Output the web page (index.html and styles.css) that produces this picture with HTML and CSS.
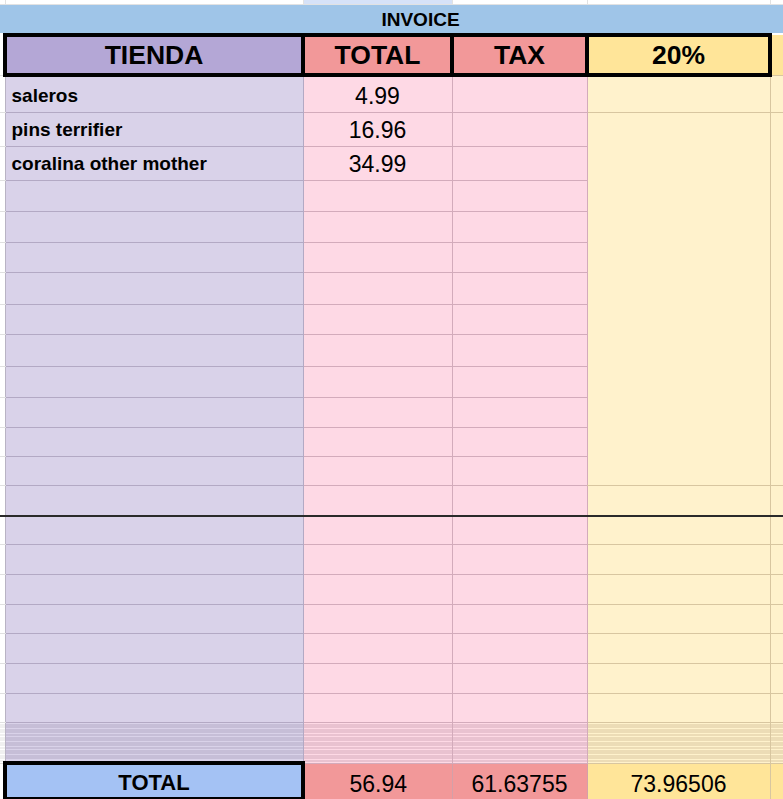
FILE: index.html
```html
<!DOCTYPE html>
<html lang="es">
<head>
<meta charset="utf-8">
<title>Invoice</title>
<link rel="stylesheet" href="styles.css">
</head>
<body>
<table class="sheet">
  <colgroup>
    <col class="w-gap"><col class="w-store"><col class="w-total"><col class="w-tax"><col class="w-pct"><col class="w-tail">
  </colgroup>
  <tbody>
    <tr class="h4">
      <td class="plain"></td><td class="plain"></td><td class="paleblue"></td><td class="plain"></td><td class="plain"></td><td class="plain"></td>
    </tr>
    <tr class="h31">
      <td class="band" colspan="6">INVOICE</td>
    </tr>
    <tr class="h40">
      <td class="gap"></td>
      <th class="head head-store">TIENDA</th>
      <th class="head head-red">TOTAL</th>
      <th class="head head-red">TAX</th>
      <th class="head head-yellow">20%</th>
      <td class="tail-head"></td>
    </tr>
    <tr class="h37">
      <td class="gap"></td><td class="store name">saleros</td><td class="pink num">4.99</td><td class="pink"></td><td class="yellow"></td><td class="yellow"></td>
    </tr>
    <tr class="h34">
      <td class="gap"></td><td class="store name">pins terrifier</td><td class="pink num">16.96</td><td class="pink"></td><td class="yellow" rowspan="12"></td><td class="yellow" rowspan="12"></td>
    </tr>
    <tr class="h34">
      <td class="gap"></td><td class="store name">coralina other mother</td><td class="pink num">34.99</td><td class="pink"></td>
    </tr>
    <tr class="h31"><td class="gap"></td><td class="store"></td><td class="pink"></td><td class="pink"></td></tr>
    <tr class="h31"><td class="gap"></td><td class="store"></td><td class="pink"></td><td class="pink"></td></tr>
    <tr class="h30"><td class="gap"></td><td class="store"></td><td class="pink"></td><td class="pink"></td></tr>
    <tr class="h32"><td class="gap"></td><td class="store"></td><td class="pink"></td><td class="pink"></td></tr>
    <tr class="h30"><td class="gap"></td><td class="store"></td><td class="pink"></td><td class="pink"></td></tr>
    <tr class="h32"><td class="gap"></td><td class="store"></td><td class="pink"></td><td class="pink"></td></tr>
    <tr class="h31"><td class="gap"></td><td class="store"></td><td class="pink"></td><td class="pink"></td></tr>
    <tr class="h30"><td class="gap"></td><td class="store"></td><td class="pink"></td><td class="pink"></td></tr>
    <tr class="h29"><td class="gap"></td><td class="store"></td><td class="pink"></td><td class="pink"></td></tr>
    <tr class="h29"><td class="gap"></td><td class="store"></td><td class="pink"></td><td class="pink"></td></tr>
    <tr class="h31 freeze">
      <td class="gap"></td><td class="store"></td><td class="pink"></td><td class="pink"></td><td class="yellow"></td><td class="yellow"></td>
    </tr>
    <tr class="h28"><td class="gap"></td><td class="store"></td><td class="pink"></td><td class="pink"></td><td class="yellow"></td><td class="yellow"></td></tr>
    <tr class="h30"><td class="gap"></td><td class="store"></td><td class="pink"></td><td class="pink"></td><td class="yellow"></td><td class="yellow"></td></tr>
    <tr class="h30"><td class="gap"></td><td class="store"></td><td class="pink"></td><td class="pink"></td><td class="yellow"></td><td class="yellow"></td></tr>
    <tr class="h29"><td class="gap"></td><td class="store"></td><td class="pink"></td><td class="pink"></td><td class="yellow"></td><td class="yellow"></td></tr>
    <tr class="h30"><td class="gap"></td><td class="store"></td><td class="pink"></td><td class="pink"></td><td class="yellow"></td><td class="yellow"></td></tr>
    <tr class="h30"><td class="gap"></td><td class="store"></td><td class="pink"></td><td class="pink"></td><td class="yellow"></td><td class="yellow"></td></tr>
    <tr class="h29"><td class="gap"></td><td class="store"></td><td class="pink"></td><td class="pink"></td><td class="yellow"></td><td class="yellow"></td></tr>
    <tr class="h41 squish">
      <td class="gap"></td><td class="store"></td><td class="pink"></td><td class="pink"></td><td class="yellow"></td><td class="yellow"></td>
    </tr>
    <tr class="h36">
      <td class="gap"></td>
      <td class="sum-label">TOTAL</td>
      <td class="sum sum-red">56.94</td>
      <td class="sum sum-red">61.63755</td>
      <td class="sum sum-yellow">73.96506</td>
      <td class="sum-tail"></td>
    </tr>
  </tbody>
</table>
</body>
</html>
```
FILE: styles.css
```css
html, body {
  margin: 0;
  padding: 0;
  overflow: hidden;
  background: #ffffff;
}

.sheet {
  border-collapse: collapse;
  table-layout: fixed;
  width: 783px;
  font-family: "Liberation Sans", Arial, sans-serif;
  color: #000;
}

.w-gap { width: 5px; }
.w-store { width: 298px; }
.w-total { width: 149px; }
.w-tax { width: 135px; }
.w-pct { width: 183px; }
.w-tail { width: 13px; }

td, th {
  padding: 0;
  vertical-align: bottom;
  white-space: nowrap;
  overflow: hidden;
  font-weight: normal;
  --line: #e2e2e2;
  border-right: 1px solid var(--line);
  border-bottom: 1px solid var(--line);
}

/* row heights */
.h4 { height: 4px; }
.h28 { height: 28px; }
.h29 { height: 29px; }
.h30 { height: 30px; }
.h31 { height: 31px; }
.h32 { height: 32px; }
.h34 { height: 34px; }
.h36 { height: 36px; }
.h37 { height: 37px; }
.h40 { height: 40px; }
.h41 { height: 41px; }

/* top strip */
td.plain { background: #fff; }
td.paleblue { background: #d6e2f8; }

/* title band */
td.band {
  background: #9fc5e8;
  border-bottom: 0;
  border-right: 0;
  text-align: center;
  font-weight: bold;
  font-size: 19px;
  padding: 0 0 2px 58px;
}

/* column colours */
td.gap { background: #fff; --line: #e0e0e0; border-right-color: #b9b3c4; }
td.store { background: #d9d2e9; --line: #b3a9c4; }
td.pink { background: #fed9e5; --line: #d3abbb; }
td.yellow { background: #fff2cc; --line: #d8c6a0; }

/* header row */
th.head {
  border: 4px solid #000;
  font-weight: bold;
  font-size: 26.5px;
  text-align: center;
  padding-bottom: 2px;
}
th.head-store { background: #b4a7d6; }
th.head-red { background: #f29899; }
th.head-yellow { background: #ffe599; }
td.tail-head { background: #ffe599; --line: #d8c6a0; }

/* data text */
td.name {
  font-weight: bold;
  font-size: 19px;
  padding-left: 6px;
  padding-bottom: 5px;
}
td.num {
  font-size: 23px;
  text-align: center;
  padding-bottom: 2px;
}

/* thick divider */
tr.freeze td { border-bottom: 2px solid #2a2a2a; }

/* collapsed hidden rows */
tr.squish td {
  background-image: repeating-linear-gradient(
    to bottom,
    transparent 0,
    transparent 1.6px,
    var(--line) 1.6px,
    var(--line) 2.6px
  );
}

/* totals row */
td.sum-label {
  border: 4px solid #000;
  background: #a4c2f4;
  font-weight: bold;
  font-size: 22px;
  text-align: center;
  padding-bottom: 1px;
}
td.sum {
  font-size: 23px;
  text-align: center;
  padding-bottom: 1px;
}
td.sum-red { background: #f29899; --line: #d3a0a8; }
td.sum-yellow { background: #ffe599; --line: #d8c6a0; }
td.sum-tail { background: #ffe599; --line: #d8c6a0; }
```
